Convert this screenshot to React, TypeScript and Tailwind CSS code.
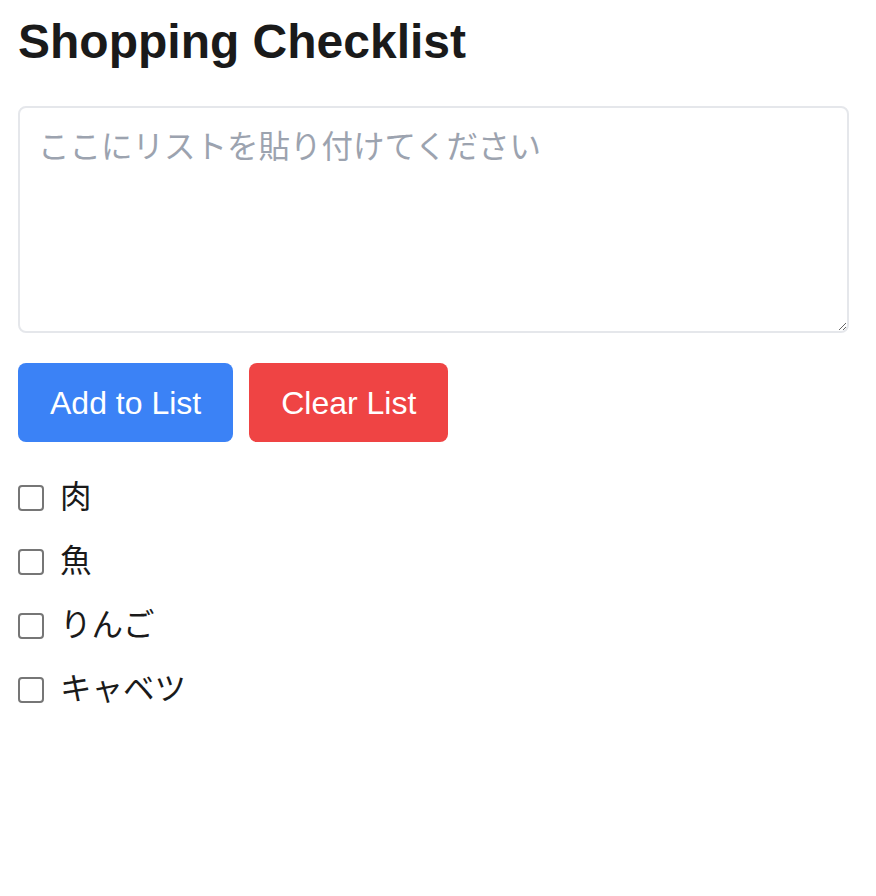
import React, { useState } from 'react';

const initialItems = ['肉', '魚', 'りんご', 'キャベツ'];

export default function App() {
  const [text, setText] = useState('');
  const [items, setItems] = useState<string[]>(initialItems);
  const [checked, setChecked] = useState<Record<number, boolean>>({});

  const addItems = () => {
    const lines = text.split('\n').map((l) => l.trim()).filter(Boolean);
    if (lines.length) setItems([...items, ...lines]);
    setText('');
  };

  return (
    <div
      className="min-h-screen bg-white p-[18px] text-[#1a1a1a]"
      style={{ fontFamily: '"Liberation Sans", Arial, "Noto Sans CJK JP", sans-serif' }}
    >
      <h1 className="text-[48px] font-bold leading-none">Shopping Checklist</h1>

      {/* Input */}
      <textarea
        value={text}
        onChange={(e) => setText(e.target.value)}
        placeholder="ここにリストを貼り付けてください"
        className="mt-[40px] block h-[227px] w-[831px] rounded-lg border-2 border-[#e5e7eb] px-[18px] pt-[20px] pb-[18px] text-[31.5px] leading-tight outline-none placeholder:text-[#9ca3af]"
      />

      {/* Actions */}
      <div className="mt-[30px] flex gap-4">
        <button
          onClick={addItems}
          className="h-[79px] rounded-lg bg-[#3b82f6] px-8 text-[32px] text-white"
        >
          Add to List
        </button>
        <button
          onClick={() => {
            setItems([]);
            setChecked({});
          }}
          className="h-[79px] rounded-lg bg-[#ef4444] px-8 text-[32px] text-white"
        >
          Clear List
        </button>
      </div>

      {/* Checklist */}
      <ul className="mt-[24px] flex flex-col">
        {items.map((item, idx) => (
          <li key={idx} className="flex h-[64px] items-center gap-[16px]">
            <input
              type="checkbox"
              checked={!!checked[idx]}
              onChange={() => setChecked({ ...checked, [idx]: !checked[idx] })}
              className="h-[26px] w-[26px] appearance-none rounded-[4px] border-2 border-[#767676] bg-white checked:bg-[#3b82f6]"
            />
            <span className="text-[31.5px]">{item}</span>
          </li>
        ))}
      </ul>
    </div>
  );
}
